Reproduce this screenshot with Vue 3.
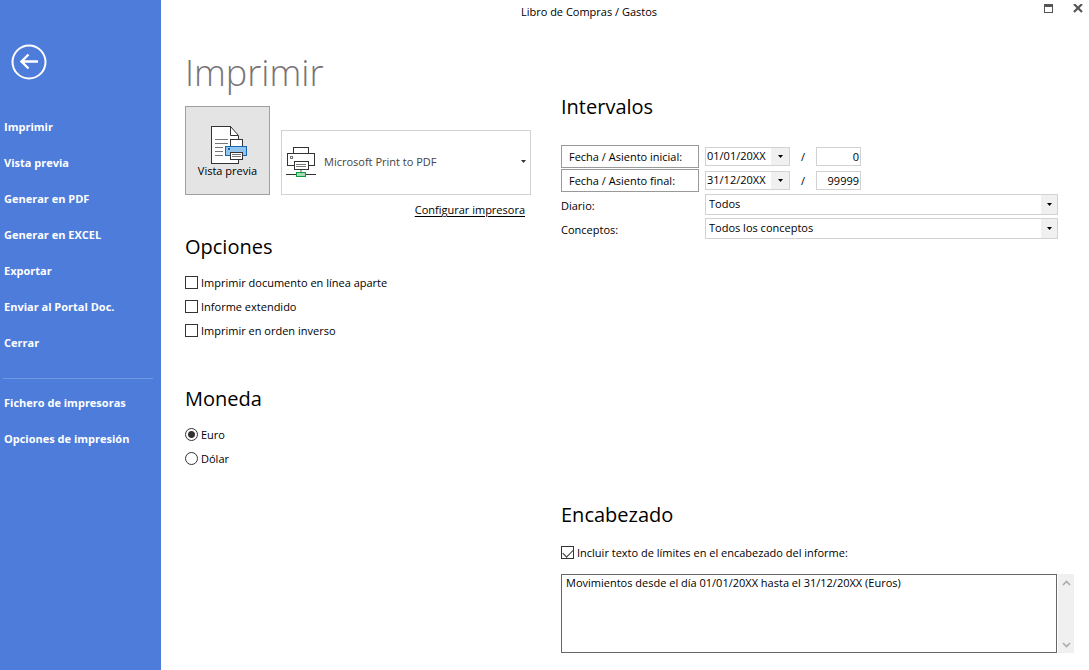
<script setup>
import { ref } from 'vue'

const mainMenu = ['Imprimir', 'Vista previa', 'Generar en PDF', 'Generar en EXCEL', 'Exportar', 'Enviar al Portal Doc.', 'Cerrar']
const setupMenu = ['Fichero de impresoras', 'Opciones de impresión']

const options = ref([
  { id: 'separate', label: 'Imprimir documento en línea aparte', on: false },
  { id: 'extended', label: 'Informe extendido', on: false },
  { id: 'reverse', label: 'Imprimir en orden inverso', on: false },
])
const currencies = [
  { id: 'eur', label: 'Euro' },
  { id: 'usd', label: 'Dólar' },
]
const currency = ref('eur')
const ranges = ref([
  { id: 'from', label: 'Fecha / Asiento inicial:', date: '01/01/20XX', entry: '0' },
  { id: 'to', label: 'Fecha / Asiento final:', date: '31/12/20XX', entry: '99999' },
])
const filters = [
  { id: 'journal', label: 'Diario:', value: 'Todos' },
  { id: 'concepts', label: 'Conceptos:', value: 'Todos los conceptos' },
]
const includeLimits = ref(true)
const header = ref('Movimientos desde el día 01/01/20XX hasta el 31/12/20XX (Euros)')
</script>

<template>
  <div class="window">
    <aside class="sidebar">
      <button class="back" type="button" aria-label="Volver">
        <svg width="36" height="36" viewBox="0 0 36 36" fill="none" stroke="#fff">
          <circle cx="18" cy="18" r="16.5" stroke-width="2" />
          <path d="M10.5 17.5H27M17.5 10.5L10.5 17.5L17.5 24.5" stroke-width="2.4" />
        </svg>
      </button>
      <nav>
        <a v-for="item in mainMenu" :key="item" href="#">{{ item }}</a>
        <hr />
        <a v-for="item in setupMenu" :key="item" href="#">{{ item }}</a>
      </nav>
    </aside>

    <div class="content">
      <header class="titlebar">
        <span class="caption">Libro de Compras / Gastos</span>
        <div class="controls">
          <button type="button" aria-label="Maximizar">
            <svg width="9" height="9" viewBox="0 0 9 9" shape-rendering="crispEdges">
              <path d="M0 0H9V9H0ZM1 3V8H8V3Z" fill="#555" fill-rule="evenodd" />
            </svg>
          </button>
          <button type="button" aria-label="Cerrar ventana">
            <svg width="10" height="10" viewBox="0 0 10 10">
              <path d="M1 0L9 8M9 0L1 8" stroke="#555" stroke-width="2.2" />
            </svg>
          </button>
        </div>
      </header>

      <main class="columns">
        <div class="left">
          <h1>Imprimir</h1>
          <div class="print-row">
            <button class="preview" type="button">
              <svg width="38" height="38" viewBox="0 0 38 38" fill="none" shape-rendering="crispEdges">
                <path d="M.5 .5H19.5L27.5 9.5V37.5H.5Z" fill="#fff" />
                <path d="M19.5 .5H.5V37.5H27.5V9.5" stroke="#333" />
                <path d="M19.5 .5V9.5H27.5Z" fill="#fff" stroke="#333" shape-rendering="auto" />
                <path d="M4 13.5H17M4 17.5H17M4 21.5H12M4 25.5H12M4 29.5H12" stroke="#777" />
                <path d="M19.5 13.5H31.5V20.5H19.5Z" fill="#fff" stroke="#333" />
                <path d="M14.5 20.5H35.5V29.5H14.5Z" fill="#92c5ee" stroke="#1466b0" />
                <path d="M17 22H19V24H17Z" fill="#1466b0" />
                <path d="M19.5 26.5H31.5V33.5H19.5Z" fill="#fff" stroke="#333" />
                <path d="M21 28.5H30M21 30.5H30" stroke="#777" />
              </svg>
              <span>Vista previa</span>
            </button>
            <button class="printer" type="button">
              <svg width="30" height="30" viewBox="0 0 30 30" fill="none" shape-rendering="crispEdges">
                <path d="M7.5 .5H22.5V6.5H7.5Z" stroke="#333" />
                <path d="M7.5 18.5H1.5V6.5H28.5V18.5H22.5" stroke="#333" />
                <path d="M4.5 9.5H6.5V11.5H4.5Z" stroke="#777" />
                <path d="M8.5 14.5H22.5V22.5H8.5Z" fill="#fff" stroke="#333" />
                <path d="M10 17.5H20M10 19.5H20" stroke="#777" />
                <path d="M15 23V25" stroke="#aaa" stroke-width="2" />
                <path d="M0 27.5H30" stroke="#333" />
                <path d="M10.5 25.5H19.5V29.5H10.5Z" fill="#a5dbb0" stroke="#109a40" />
              </svg>
              <span class="printer-name">Microsoft Print to PDF</span>
              <svg class="caret" width="5" height="3" viewBox="0 0 5 3"><path d="M0 0H5L2.5 3Z" fill="#333" /></svg>
            </button>
          </div>
          <a class="setup" href="#">Configurar impresora</a>

          <section class="options">
            <h2>Opciones</h2>
            <label v-for="o in options" :key="o.id" class="choice">
              <input v-model="o.on" type="checkbox" />{{ o.label }}
            </label>
          </section>

          <section class="currency">
            <h2>Moneda</h2>
            <label v-for="c in currencies" :key="c.id" class="choice">
              <input v-model="currency" type="radio" name="currency" :value="c.id" />{{ c.label }}
            </label>
          </section>
        </div>

        <div class="right">
          <section class="intervals">
            <h2>Intervalos</h2>
            <div class="rows">
              <div v-for="r in ranges" :key="r.id" class="row">
                <label class="boxed" :for="r.id">{{ r.label }}</label>
                <div class="date">
                  <input :id="r.id" v-model="r.date" type="text" />
                  <button type="button" aria-label="Abrir calendario">
                    <svg width="5" height="3" viewBox="0 0 5 3"><path d="M0 0H5L2.5 3Z" fill="#000" /></svg>
                  </button>
                </div>
                <span class="slash">/</span>
                <input v-model="r.entry" class="entry" type="text" inputmode="numeric" aria-label="Asiento" />
              </div>
              <div v-for="f in filters" :key="f.id" class="row">
                <label class="plain" :for="f.id">{{ f.label }}</label>
                <div class="select">
                  <select :id="f.id"><option>{{ f.value }}</option></select>
                  <span class="drop">
                    <svg width="5" height="3" viewBox="0 0 5 3"><path d="M0 0H5L2.5 3Z" fill="#000" /></svg>
                  </span>
                </div>
              </div>
            </div>
          </section>

          <section class="heading-text">
            <h2>Encabezado</h2>
            <label class="choice">
              <input v-model="includeLimits" type="checkbox" />Incluir texto de límites en el encabezado del informe:
            </label>
            <div class="memo">
              <textarea v-model="header" aria-label="Texto del encabezado"></textarea>
              <div class="scroll">
                <button type="button" aria-label="Subir">
                  <svg width="9" height="6" viewBox="0 0 9 6"><path d="M1 5L4.5 1.5L8 5" fill="none" stroke="#aaa" stroke-width="1.6" /></svg>
                </button>
                <button type="button" aria-label="Bajar">
                  <svg width="9" height="6" viewBox="0 0 9 6"><path d="M1 1L4.5 4.5L8 1" fill="none" stroke="#aaa" stroke-width="1.6" /></svg>
                </button>
              </div>
            </div>
          </section>
        </div>
      </main>
    </div>
  </div>
</template>

<style>
body {
  margin: 0;
  background: #fff;
}
</style>

<style scoped>
.window,
.window * {
  box-sizing: border-box;
}
.window {
  display: flex;
  min-height: 100vh;
  font: 11px/16px 'Open Sans', 'Noto Sans', sans-serif;
  color: #000;
}
button,
input,
select,
textarea {
  font: inherit;
  color: inherit;
  margin: 0;
  padding: 0;
  border: 0;
  border-radius: 0;
  background: none;
}
svg {
  display: block;
  flex: none;
}
h1,
h2 {
  margin: 0;
  font-weight: 400;
}
h1 {
  font-size: 36px;
  line-height: 48px;
  font-weight: 300;
  color: #787275;
}
h2 {
  font-size: 20px;
  line-height: 32px;
}

.sidebar {
  flex: 0 0 161px;
  padding: 44px 8px 0 4px;
  background: #4d7cdb;
  color: #fff;
}
.back {
  display: block;
  margin-left: 7px;
}
nav {
  margin-top: 29px;
}
nav a {
  display: block;
  line-height: 36px;
  font-weight: 700;
  color: inherit;
  text-decoration: none;
  white-space: nowrap;
}
hr {
  height: 1px;
  margin: 17px 0 6px -1px;
  border: 0;
  background: #7398e2;
}

.content {
  flex: 1;
  min-width: 0;
  display: flex;
  flex-direction: column;
}
.titlebar {
  display: flex;
  height: 24px;
}
.caption {
  flex: 1;
  text-align: center;
  line-height: 24px;
}
.controls {
  display: flex;
  flex: 0 0 72px;
  justify-content: flex-end;
  align-items: flex-start;
  gap: 20px;
  padding: 4px 6px 0 0;
}
.columns {
  flex: 1;
  display: grid;
  grid-template-columns: 346px minmax(0, 1fr);
  gap: 30px;
  padding: 0 15px 17px 24px;
}
.left {
  padding-top: 25px;
}
.print-row {
  display: flex;
  align-items: flex-end;
  gap: 11px;
  margin-top: 9px;
}
.preview {
  display: flex;
  flex-direction: column;
  align-items: center;
  width: 85px;
  height: 89px;
  padding-top: 19px;
  border: 1px solid #a0a0a0;
  background: #e4e4e4;
}
.preview svg {
  margin-left: 4px;
}
.preview span {
  line-height: 14px;
}
.printer {
  flex: 1;
  display: flex;
  align-items: center;
  gap: 8px;
  height: 65px;
  padding: 0 4px 2px;
  border: 1px solid #d2d2d2;
}
.printer-name {
  flex: 1;
  text-align: left;
  color: #444;
}
.setup {
  display: block;
  width: fit-content;
  margin: 7px 6px 0 auto;
  color: inherit;
  text-underline-offset: 2px;
}
.options {
  margin-top: 13px;
}
.currency {
  margin-top: 40px;
}
.choice {
  display: flex;
  align-items: center;
  gap: 3px;
  height: 24px;
  padding-bottom: 1px;
}
h2 + .choice {
  margin-top: 8px;
}
.heading-text h2 + .choice {
  margin-top: 10px;
}
.choice input {
  appearance: none;
  flex: none;
  width: 13px;
  height: 13px;
  border: 1px solid #333;
  background: #fff;
}
.choice input[type='radio'] {
  border-radius: 50%;
}
.choice input[type='radio']:checked {
  background: radial-gradient(circle, #333 3px, #fff 4px);
}
.choice input[type='checkbox']:checked::before {
  content: '';
  display: block;
  width: 9px;
  height: 5px;
  margin: 2px 0 0 1px;
  border: solid #333;
  border-width: 0 0 1px 1px;
  transform: rotate(-45deg);
}

.right {
  display: flex;
  flex-direction: column;
  justify-content: space-between;
  padding-top: 67px;
}
.rows {
  margin-top: 21px;
  padding-right: 16px;
}
.row {
  display: flex;
  align-items: center;
  height: 24px;
}
.boxed,
.plain {
  flex: 0 0 138px;
  margin-right: 6px;
}
.plain {
  padding-top: 3px;
}
.boxed {
  height: 23px;
  padding-left: 7px;
  border: 1px solid #999;
  line-height: 22px;
}
.date {
  display: flex;
  width: 85px;
  height: 19px;
  border: 1px solid #d2d2d2;
}
.date input {
  flex: 1;
  min-width: 0;
  padding-left: 1px;
}
.date button,
.drop {
  display: flex;
  align-items: center;
  justify-content: center;
  width: 18px;
  background: #f0f0f0;
}
.slash {
  width: 26px;
  padding-top: 2px;
  text-align: center;
}
.entry {
  width: 45px;
  height: 19px;
  padding-right: 1px;
  border: 1px solid #d2d2d2;
  text-align: right;
}
.select {
  flex: 1;
  display: grid;
  grid-template-columns: 1fr 16px;
  height: 21px;
  border: 1px solid #d2d2d2;
}
.select select {
  grid-area: 1 / 1 / 2 / 3;
  appearance: none;
  padding-left: 3px;
}
.drop {
  grid-area: 1 / 2;
  width: auto;
  pointer-events: none;
}
.memo {
  display: flex;
  gap: 1px;
  margin-top: 9px;
}
.memo textarea {
  flex: 1;
  height: 79px;
  padding: 0 4px;
  border: 1px solid #666;
  resize: none;
  overflow: hidden;
}
.scroll {
  display: flex;
  flex-direction: column;
  justify-content: space-between;
  width: 16px;
  background: #f0f0f0;
}
.scroll button {
  display: flex;
  align-items: center;
  justify-content: center;
  height: 17px;
}
</style>
